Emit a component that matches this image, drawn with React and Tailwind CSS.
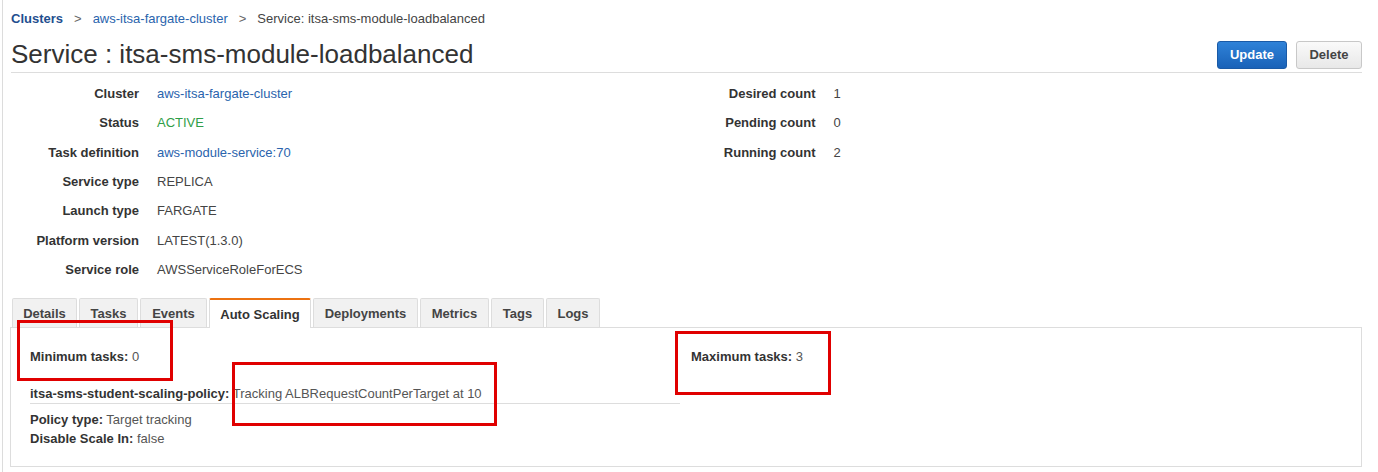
import React from 'react';

const leftRows = [
  { label: 'Cluster', value: 'aws-itsa-fargate-cluster', kind: 'link' },
  { label: 'Status', value: 'ACTIVE', kind: 'ok' },
  { label: 'Task definition', value: 'aws-module-service:70', kind: 'link' },
  { label: 'Service type', value: 'REPLICA' },
  { label: 'Launch type', value: 'FARGATE' },
  { label: 'Platform version', value: 'LATEST(1.3.0)' },
  { label: 'Service role', value: 'AWSServiceRoleForECS' },
];

const rightRows = [
  { label: 'Desired count', value: '1' },
  { label: 'Pending count', value: '0' },
  { label: 'Running count', value: '2' },
];

// tab widths measured from the console
const tabs = [
  { name: 'Details', w: 'w-[65px]' },
  { name: 'Tasks', w: 'w-[59px]' },
  { name: 'Events', w: 'w-[67px]' },
  { name: 'Auto Scaling', w: 'w-[102px]', active: true },
  { name: 'Deployments', w: 'w-[105px]' },
  { name: 'Metrics', w: 'w-[69px]' },
  { name: 'Tags', w: 'w-[53px]' },
  { name: 'Logs', w: 'w-[54px]' },
];

const valueClass = (kind) => {
  if (kind === 'link') return 'text-[#2a64ad]';
  if (kind === 'ok') return 'text-[#2f9e48]';
  return 'text-[#444]';
};

const InfoRow = ({ label, value, kind }) => (
  <div className="flex items-center h-[29.33px]">
    <div className="w-[128px] text-right font-bold text-[#333]">{label}</div>
    <div className={`ml-[18px] ${valueClass(kind)}`}>{value}</div>
  </div>
);

export default function App() {
  return (
    <div
      className="relative min-h-[472px] bg-white text-[13px] text-[#333] border-l border-[#dcdcdc] ml-[2px]"
      style={{ fontFamily: '"Liberation Sans", Arial, sans-serif' }}
    >
      <div className="pl-[8px] pr-[16px]">
        {/* Breadcrumb */}
        <div className="pt-[11px] flex items-center leading-[16px]">
          <span className="font-bold text-[#1f4f8f]">Clusters</span>
          <span className="mx-[11px] text-[#666]">&gt;</span>
          <span className="text-[#2a64ad]">aws-itsa-fargate-cluster</span>
          <span className="mx-[11px] text-[#666]">&gt;</span>
          <span className="text-[#444]">Service: itsa-sms-module-loadbalanced</span>
        </div>

        {/* Header */}
        <div className="mt-[12px] flex items-end justify-between border-b border-[#dddddd] pb-[3px]">
          <h1 className="text-[26px] leading-[30px] text-[#333]">Service : itsa-sms-module-loadbalanced</h1>
          <div className="flex gap-[9px]">
            <button className="h-[28px] w-[70px] rounded-[3px] border border-[#1a5aa6] bg-gradient-to-b from-[#2f82d8] to-[#1962b8] text-white font-bold text-[13px]">
              Update
            </button>
            <button className="h-[28px] w-[66px] rounded-[3px] border border-[#c8c8c8] bg-gradient-to-b from-[#fafafa] to-[#e8e8e8] text-[#444] font-bold text-[13px]">
              Delete
            </button>
          </div>
        </div>

        {/* Service details */}
        <div className="pt-[6px] grid grid-cols-2">
          <div>
            {leftRows.map((r) => (
              <InfoRow key={r.label} {...r} />
            ))}
          </div>
          <div className="ml-[1px]">
            {rightRows.map((r) => (
              <InfoRow key={r.label} {...r} />
            ))}
          </div>
        </div>

        {/* Tabs */}
        <div className="mt-[14px] flex gap-[2px] pl-[1px] relative z-10">
          {tabs.map((t) =>
            t.active ? (
              <div
                key={t.name}
                className={`${t.w} h-[30px] flex items-center justify-center font-bold text-[#333] bg-white border-x border-t-2 border-x-[#dddddd] border-t-[#ec7211] rounded-t-[2px]`}
              >
                {t.name}
              </div>
            ) : (
              <div
                key={t.name}
                className={`${t.w} h-[29px] flex items-center justify-center font-bold text-[#444] bg-[#f1f1f1] border-x border-t border-[#dddddd] rounded-t-[2px]`}
              >
                {t.name}
              </div>
            )
          )}
        </div>

        {/* Tab panel */}
        <div className="mt-[-1px] border border-[#dddddd] w-[1352px] -ml-[1px] pl-[19px] pt-[20px] pb-[18px] flex">
          <div className="w-[650px]">
            <div className="leading-[18px]">
              <span className="font-bold">Minimum tasks:</span> <span className="text-[#555]">0</span>
            </div>
            <div className="mt-[19px] border-b border-[#dddddd] leading-[18px]">
              <span className="font-bold">itsa-sms-student-scaling-policy:</span>{' '}
              <span className="text-[#555]">Tracking ALBRequestCountPerTarget at 10</span>
            </div>
            <div className="mt-[6px] leading-[19px]">
              <span className="font-bold">Policy type:</span> <span className="text-[#555]">Target tracking</span>
            </div>
            <div className="leading-[19px]">
              <span className="font-bold">Disable Scale In:</span> <span className="text-[#555]">false</span>
            </div>
          </div>
          <div className="ml-[11px] leading-[18px]">
            <span className="font-bold">Maximum tasks:</span> <span className="text-[#555]">3</span>
          </div>
        </div>
      </div>

      {/* Annotation boxes */}
      <div className="absolute left-[14px] top-[320px] w-[156px] h-[61px] border-[3px] border-[#e00000] z-20" />
      <div className="absolute left-[229px] top-[362px] w-[265px] h-[64px] border-[3px] border-[#e00000] z-20" />
      <div className="absolute left-[672px] top-[331px] w-[156px] h-[64px] border-[3px] border-[#e00000] z-20" />
    </div>
  );
}
